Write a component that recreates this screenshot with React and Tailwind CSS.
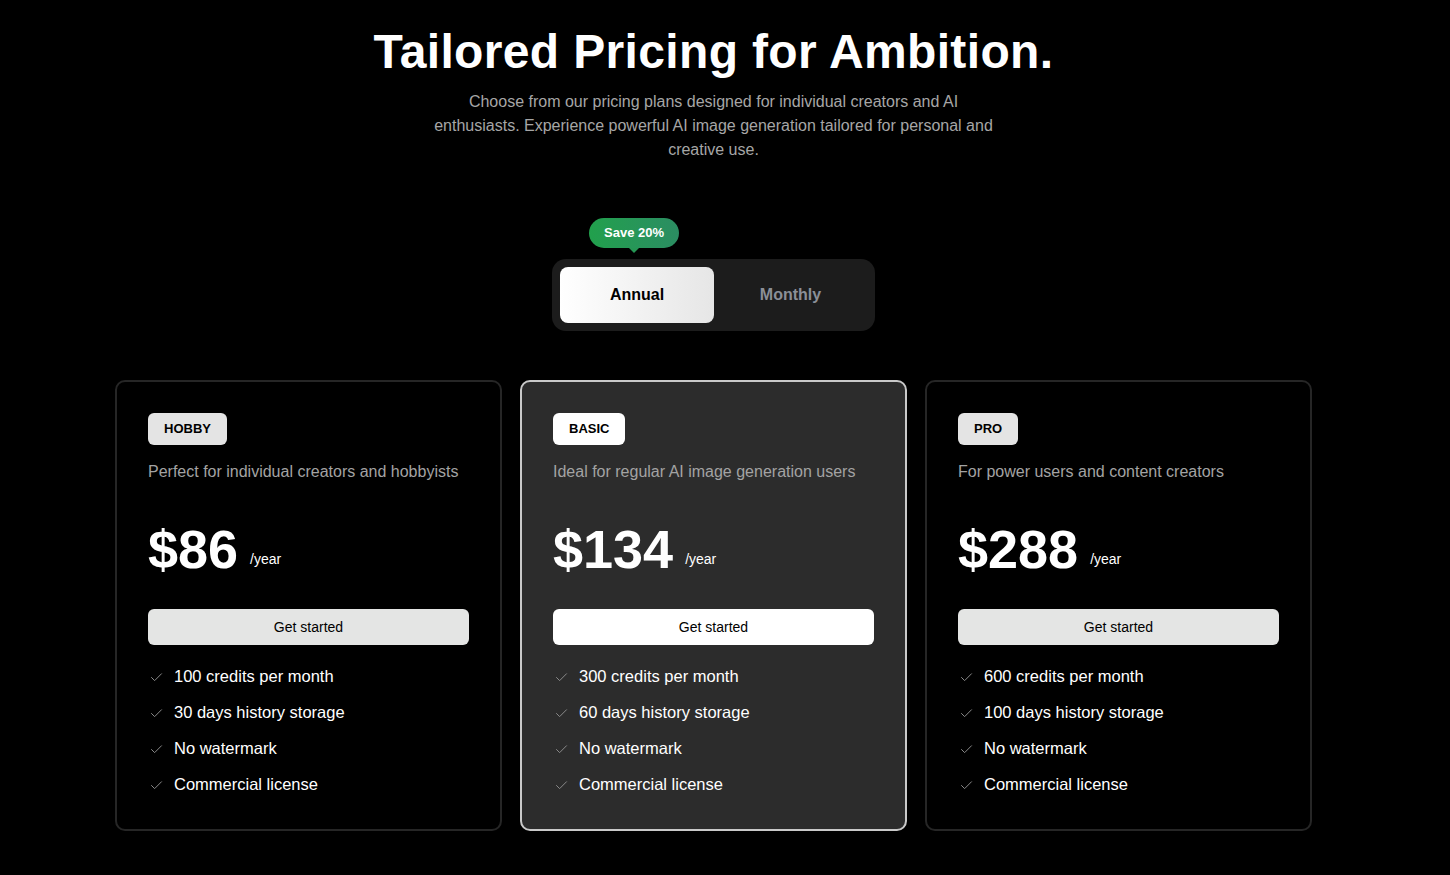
import React from "react";

const plans = [
  {
    name: "HOBBY",
    desc: "Perfect for individual creators and hobbyists",
    price: "$86",
    features: ["100 credits per month", "30 days history storage", "No watermark", "Commercial license"],
    featured: false,
  },
  {
    name: "BASIC",
    desc: "Ideal for regular AI image generation users",
    price: "$134",
    features: ["300 credits per month", "60 days history storage", "No watermark", "Commercial license"],
    featured: true,
  },
  {
    name: "PRO",
    desc: "For power users and content creators",
    price: "$288",
    features: ["600 credits per month", "100 days history storage", "No watermark", "Commercial license"],
    featured: false,
  },
];

function CheckIcon() {
  return (
    <svg width="15" height="15" viewBox="0 0 24 24" fill="none" stroke="#8a8a8a" strokeWidth="1.6" strokeLinecap="round" strokeLinejoin="round" className="mt-[6px] shrink-0">
      <path d="M20 6 9 17l-5-5" />
    </svg>
  );
}

function Card({ plan }) {
  const f = plan.featured;
  return (
    <div
      className={
        "w-[387px] h-[451px] rounded-[10px] border-2 px-[31px] pt-[31px] " +
        (f ? "bg-[#2c2c2c] border-[#c9c9c9]" : "bg-black border-[#262626]")
      }
    >
      <div
        className={
          "inline-flex h-8 items-center rounded-md px-4 text-[13px] font-bold text-black " +
          (f ? "bg-white" : "bg-[#e4e4e4]")
        }
      >
        {plan.name}
      </div>
      <p className="mt-[15px] text-[16px] leading-6 text-[#a3a3a3]">{plan.desc}</p>
      <div className="mt-[39px] flex items-end">
        <span className="text-[54px] leading-[52px] font-bold text-white">{plan.price}</span>
        <span className="ml-[12px] mb-[6px] text-[14px] leading-5 text-white">/year</span>
      </div>
      <button
        className={
          "mt-[34px] h-9 w-full rounded-md text-[14px] font-medium text-black " +
          (f ? "bg-white" : "bg-[#e4e5e4]")
        }
      >
        Get started
      </button>
      <ul className="mt-[19px] flex flex-col gap-3">
        {plan.features.map((t) => (
          <li key={t} className="flex items-start gap-[10px] pl-[1px] text-[16.5px] leading-6 text-white">
            <CheckIcon />
            <span>{t}</span>
          </li>
        ))}
      </ul>
    </div>
  );
}

export default function App() {
  return (
    <div className="min-h-screen w-full bg-black" style={{ fontFamily: "'Liberation Sans', Arial, sans-serif" }}>
      <div className="w-[1427px] flex flex-col items-center pb-10">
        <h1 className="mt-[24px] text-[48px] leading-[56px] font-bold tracking-[0.35px] text-white">
          Tailored Pricing for Ambition.
        </h1>
        <p className="mt-[10px] max-w-[570px] text-center text-[16px] leading-6 text-[#a6a6a6]">
          Choose from our pricing plans designed for individual creators and AI enthusiasts. Experience powerful AI image generation tailored for personal and creative use.
        </p>

        <div className="relative mt-[97px] flex h-[72px] w-[323px] items-center rounded-[14px] bg-[#1c1c1c] p-2">
          <div className="absolute left-[37px] top-[-41px] flex flex-col items-center">
            <div className="flex h-[30px] items-center rounded-full bg-gradient-to-r from-[#21a04c] to-[#2b8d62] px-[15px] text-[13px] font-bold text-white">
              Save 20%
            </div>
            <div className="h-0 w-0 border-x-[5px] border-t-[5px] border-x-transparent border-t-[#259654]" />
          </div>
          <button className="flex h-14 w-[154px] items-center justify-center rounded-lg bg-gradient-to-r from-white to-[#e6e6e6] text-[16px] font-bold text-black">
            Annual
          </button>
          <button className="flex h-14 flex-1 items-center justify-center text-[16px] font-bold text-[#8b8f97]">
            Monthly
          </button>
        </div>

        <div className="mt-[49px] flex gap-[18px]">
          {plans.map((p) => (
            <Card key={p.name} plan={p} />
          ))}
        </div>
      </div>
    </div>
  );
}
